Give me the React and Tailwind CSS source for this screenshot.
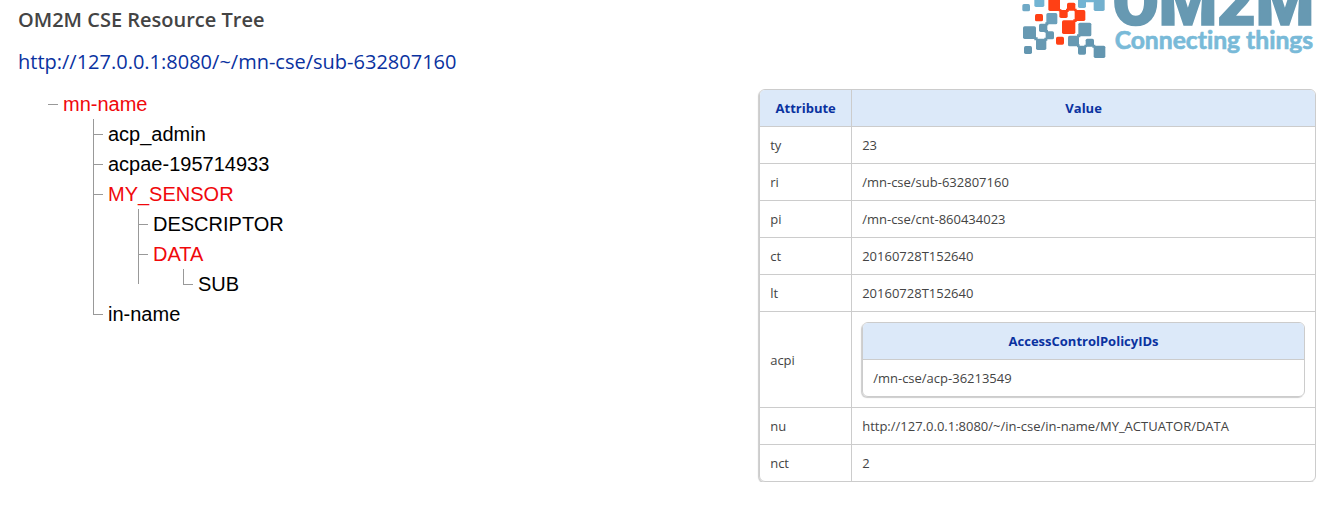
import { useState } from 'react';
import clsx from 'clsx';

const resource = {
  url: 'http://127.0.0.1:8080/~/mn-cse/sub-632807160',
  attributes: [
    { name: 'ty', value: '23' },
    { name: 'ri', value: '/mn-cse/sub-632807160' },
    { name: 'pi', value: '/mn-cse/cnt-860434023' },
    { name: 'ct', value: '20160728T152640' },
    { name: 'lt', value: '20160728T152640' },
    { name: 'acpi', title: 'AccessControlPolicyIDs', list: ['/mn-cse/acp-36213549'] },
    { name: 'nu', value: 'http://127.0.0.1:8080/~/in-cse/in-name/MY_ACTUATOR/DATA' },
    { name: 'nct', value: '2' },
  ],
};

const tree = {
  name: 'mn-name',
  children: [
    { name: 'acp_admin' },
    { name: 'acpae-195714933' },
    {
      name: 'MY_SENSOR',
      children: [
        { name: 'DESCRIPTOR' },
        { name: 'DATA', openEnded: true, children: [{ name: 'SUB' }] },
      ],
    },
    { name: 'in-name' },
  ],
};

// x, y, width, height, color
const tiles = [
  [25, 12, 23, 22, '#6fa9c6'],
  [61, -10, 30, 31, '#72b4d3'],
  [192, -8, 24, 32, '#72b4d3'],
  [239, -4, 33, 37, '#72b0ce'],
  [212, -8, 30, 15, '#72b4d3'],
  [97, 39, 33, 34, '#6ba0bb'],
  [27, 79, 39, 38, '#6799b2'],
  [75, 71, 25, 25, '#6799b2'],
  [95, 94, 25, 24, '#6799b2'],
  [66, 116, 31, 34, '#6799b2'],
  [30, 138, 24, 24, '#6396b0'],
  [193, 68, 39, 41, '#6799b2'],
  [162, 107, 33, 32, '#6799b2'],
  [192, 137, 24, 27, '#6396b0'],
  [215, 116, 25, 24, '#6396b0'],
  [239, 137, 35, 37, '#6396b0'],
  [103, -5, 35, 38, '#ff4015'],
  [136, 30, 25, 24, '#ff4015'],
  [159, 8, 25, 24, '#ff4015'],
  [182, 30, 32, 33, '#ff4015'],
  [144, 61, 40, 41, '#ff4015'],
  [63, 42, 24, 22, '#ff4015'],
  [126, 110, 24, 24, '#ff4015'],
];

function Logo() {
  return (
    <svg viewBox="24 0 882 180" className="h-[60px] w-[294px]" role="img" aria-label="OM2M Connecting things">
      {tiles.map(([x, y, width, height, fill]) => (
        <rect key={`${x}-${y}`} x={x} y={y} width={width} height={height} rx="5" fill={fill} />
      ))}
      {/* corner joints between touching tiles */}
      <path d="M130 26l12 2 2 8-10-2zM156 26h8v10h-8zM180 26h8v8h-8zM178 58h10v8h-10z" fill="#ff4015" />
      <path d="M94 67h9v9h-9zM92 90h10v8h-10zM61 112h10v9h-10zM91 113h9v9h-9zM189 103h10v9h-10zM189 133h8v9h-8zM211 134h8v8h-8zM235 134h9v9h-9z" fill="#6799b2" />
      <text
        x="296"
        y="76"
        fontSize="200"
        strokeWidth="5"
        className="fill-[#6799b2] stroke-[#6799b2] font-['Roboto'] font-black"
      >
        OM2M
      </text>
      <text
        x="302"
        y="147"
        fontSize="74"
        strokeWidth="2"
        strokeLinejoin="round"
        className="fill-[#79bad8] stroke-[#79bad8] font-['Lato'] font-bold [font-variant-ligatures:none]"
      >
        Connecting things
      </text>
    </svg>
  );
}

function TreeNode({ node, isRoot, isLast }) {
  const [open, setOpen] = useState(true);
  const hasChildren = Boolean(node.children);

  return (
    <li className="flex">
      <span className="mr-[5px] flex w-[10px] shrink-0 flex-col">
        <span className={clsx('h-4 border-b border-[#999]', !isRoot && 'border-l')} />
        {!isLast && (
          <span className={clsx('flex-1 border-l border-[#999]', node.openEnded && 'mb-[15px]')} />
        )}
      </span>
      <div>
        <button
          type="button"
          onClick={() => setOpen(!open)}
          className={clsx('block h-[30px] leading-[30px]', hasChildren ? 'text-[#f0080c]' : 'text-black')}
        >
          {node.name}
        </button>
        {hasChildren && open && (
          <ul className="ml-[30px]">
            {node.children.map((child, index) => (
              <TreeNode
                key={child.name}
                node={child}
                isLast={index === node.children.length - 1 && !child.openEnded}
              />
            ))}
          </ul>
        )}
      </div>
    </li>
  );
}

const tableClass =
  'w-full border-separate border-spacing-0 overflow-hidden rounded-md border border-[#ccc] shadow-[-1px_1px_1px_#ccc]';
const headClass = 'h-9 bg-[#dce9f9] px-[10px] font-bold text-[#0a32a0]';
const cellClass = 'h-[37px] border-t border-[#ccc] px-[10px]';

function PolicyTable({ title, items }) {
  return (
    <table className={tableClass}>
      <thead>
        <tr>
          <th className={headClass}>{title}</th>
        </tr>
      </thead>
      <tbody>
        {items.map((item) => (
          <tr key={item}>
            <td className={cellClass}>{item}</td>
          </tr>
        ))}
      </tbody>
    </table>
  );
}

function AttributeTable({ attributes }) {
  return (
    <table className={tableClass}>
      <thead>
        <tr>
          <th className={clsx(headClass, 'w-[91px]')}>Attribute</th>
          <th className={clsx(headClass, 'border-l border-[#ccc]')}>Value</th>
        </tr>
      </thead>
      <tbody>
        {attributes.map((attr) => (
          <tr key={attr.name}>
            <td className={cellClass}>{attr.name}</td>
            <td className={clsx(cellClass, 'border-l', attr.list && 'py-[10px]')}>
              {attr.list ? <PolicyTable title={attr.title} items={attr.list} /> : attr.value}
            </td>
          </tr>
        ))}
      </tbody>
    </table>
  );
}

export default function App() {
  return (
    <main className="flex bg-white pr-2 pl-[18px] font-['Trebuchet_MS','Open_Sans',sans-serif] text-[#444]">
      <section className="flex-1 pt-[5px]">
        <h1 className="text-[20px] leading-[30px] font-semibold">OM2M CSE Resource Tree</h1>
        <p className="mt-3 text-[20px] leading-[30px] text-[#0a32a0]">{resource.url}</p>
        <ul className="mt-3 ml-[30px] font-['Liberation_Sans',Arial,sans-serif] text-[20px]">
          <TreeNode node={tree} isRoot isLast />
        </ul>
      </section>
      <section className="w-[42.9%] text-[13px] leading-5">
        <div className="mb-[29px] flex justify-end">
          <Logo />
        </div>
        <AttributeTable attributes={resource.attributes} />
      </section>
    </main>
  );
}
